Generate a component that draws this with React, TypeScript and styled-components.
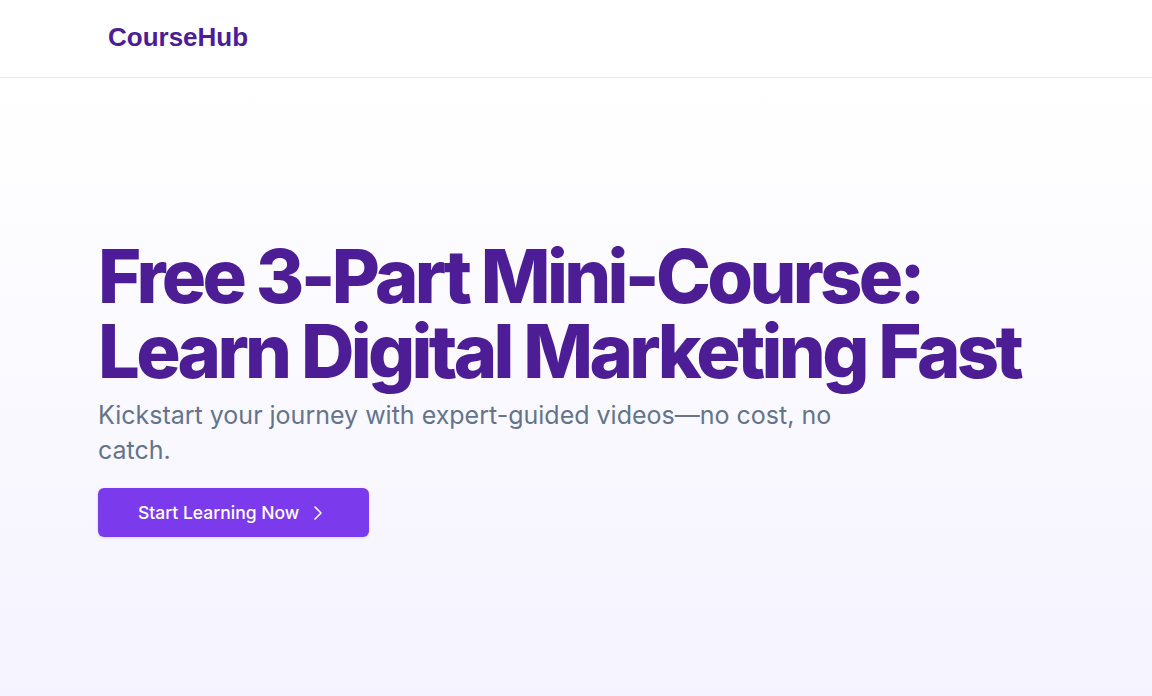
import React from "react";
import styled, { createGlobalStyle } from "styled-components";

const Global = createGlobalStyle`
  html, body { margin: 0; padding: 0; }
  body { font-family: Inter, "Noto Sans", sans-serif; background: #ffffff; }
  * { box-sizing: border-box; }
`;

const Page = styled.div`
  min-height: 696px;
  display: flex;
  flex-direction: column;
`;

const Header = styled.header`
  height: 78px;
  border-bottom: 1px solid #e5e7eb;
  background: #ffffff;
  display: flex;
  align-items: center;
  padding: 0 108px 2px;
`;

const Logo = styled.div`
  font-family: "Liberation Sans", Arial, sans-serif;
  font-weight: 700;
  font-size: 26px;
  color: #4c1d95;
`;

const Hero = styled.main`
  flex: 1;
  background: linear-gradient(180deg, #ffffff 0%, #f5f3ff 100%);
  display: flex;
  flex-direction: column;
  justify-content: flex-start;
  padding: 161px 98px 0;
`;

const Title = styled.h1`
  margin: 0;
  font-family: Inter, sans-serif;
  font-weight: 800;
  font-size: 74px;
  line-height: 75px;
  letter-spacing: -0.05em;
  color: #4c1d95;
  white-space: nowrap;
`;

const Subtitle = styled.p`
  margin: 9px 0 0;
  max-width: 768px;
  font-size: 25px;
  line-height: 35px;
  color: #64748b;
  font-weight: 400;
`;

const CTA = styled.button`
  margin-top: 20px;
  align-self: flex-start;
  display: inline-flex;
  align-items: center;
  gap: 7px;
  height: 49px;
  padding: 0 39px 0 40px;
  border: none;
  border-radius: 6px;
  background: #7c3aed;
  color: #ffffff;
  font-family: Inter, sans-serif;
  font-size: 17.5px;
  font-weight: 500;
  box-shadow: 0 1px 3px rgba(76, 29, 149, 0.15);
  cursor: pointer;
`;

const Chevron = () => (
  <svg width="24" height="24" viewBox="0 0 24 24" fill="none" stroke="currentColor" strokeWidth="1.6" strokeLinecap="round" strokeLinejoin="round">
    <path d="m9 18 6-6-6-6" />
  </svg>
);

export default function App() {
  return (
    <Page>
      <Global />
      <Header>
        <Logo>CourseHub</Logo>
      </Header>
      <Hero>
        <Title>
          Free 3-Part Mini-Course:
          <br />
          Learn Digital Marketing Fast
        </Title>
        <Subtitle>Kickstart your journey with expert-guided videos—no cost, no catch.</Subtitle>
        <CTA>
          Start Learning Now
          <Chevron />
        </CTA>
      </Hero>
    </Page>
  );
}
